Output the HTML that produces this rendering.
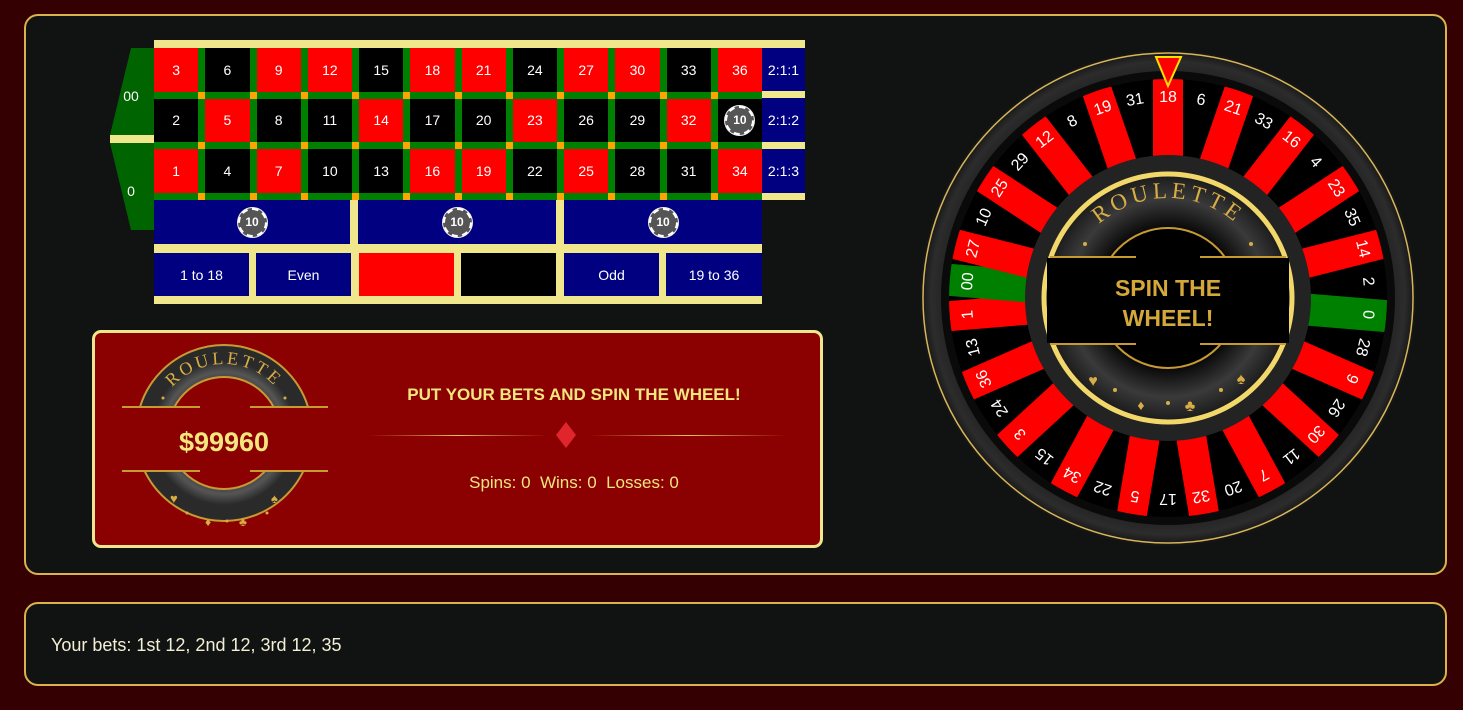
<!DOCTYPE html>
<html><head><meta charset="utf-8">
<style>
*{box-sizing:border-box;margin:0;padding:0}
body{width:1463px;height:710px;overflow:hidden;background:#350002;font-family:"Liberation Sans",sans-serif;position:relative}
.panel{position:absolute;left:24px;top:14px;width:1423px;height:561px;background:#111313;border:2px solid #dcb24c;border-radius:14px}
.panel2{position:absolute;left:24px;top:602px;width:1423px;height:84px;background:#111313;border:2px solid #dcb24c;border-radius:14px;color:#f3efd6;font-size:18px;padding:31px 0 0 25px}
.a{position:absolute}
.kh{background:#f0e68c}
.grid{position:absolute;left:154px;top:48px;width:608px;height:152px;background:#008000;display:grid;grid-template-columns:repeat(12,1fr);grid-template-rows:repeat(3,1fr);column-gap:7px;row-gap:7px;padding-bottom:7px}
.c{position:relative;display:flex;align-items:center;justify-content:center;color:#fff;font-size:14px}
.c::after{content:"";position:absolute;right:-7px;bottom:-7px;width:7px;height:7px;background:#ffa500}
.c.l::after{display:none}
.r{background:#f00}.b{background:#000}
.bl{position:absolute;background:#000080;color:#fff;font-size:14px;display:flex;align-items:center;justify-content:center}
.chip{width:29px;height:29px;border-radius:50%;background:#555;border:2px dashed #fff;box-shadow:0 0 0 1px #eee;color:#fff;font-weight:bold;font-size:12px;display:flex;align-items:center;justify-content:center}
.info{position:absolute;left:92px;top:330px;width:731px;height:218px;background:#8b0000;border:3px solid #f0e68c;border-radius:9px}
</style></head><body>
<div class="panel"></div>

<div class="a kh" style="left:154px;top:40px;width:651px;height:160px"></div>
<div class="a kh" style="left:154px;top:200px;width:608px;height:104px"></div>
<svg class="a" style="left:108px;top:48px" width="47" height="183">
<polygon points="23,0 46,0 46,87 2,87" fill="#006400"/>
<rect x="2" y="87" width="44" height="8" fill="#f0e68c"/>
<polygon points="2,95 46,95 46,182 23,182" fill="#006400"/>
<text x="23" y="53" fill="#fff" font-size="14" text-anchor="middle" font-family="Liberation Sans">00</text>
<text x="23" y="148" fill="#fff" font-size="14" text-anchor="middle" font-family="Liberation Sans">0</text>
</svg>
<div class="grid">
<div class="c r">3</div><div class="c b">6</div><div class="c r">9</div><div class="c r">12</div><div class="c b">15</div><div class="c r">18</div><div class="c r">21</div><div class="c b">24</div><div class="c r">27</div><div class="c r">30</div><div class="c b">33</div><div class="c r l">36</div>
<div class="c b">2</div><div class="c r">5</div><div class="c b">8</div><div class="c b">11</div><div class="c r">14</div><div class="c b">17</div><div class="c b">20</div><div class="c r">23</div><div class="c b">26</div><div class="c b">29</div><div class="c r">32</div><div class="c b l"><div class="chip">10</div></div>
<div class="c r">1</div><div class="c b">4</div><div class="c r">7</div><div class="c b">10</div><div class="c b">13</div><div class="c r">16</div><div class="c r">19</div><div class="c b">22</div><div class="c r">25</div><div class="c b">28</div><div class="c b">31</div><div class="c r l">34</div>
</div>
<div class="bl" style="left:762px;top:48px;width:43px;height:43px">2:1:1</div>
<div class="bl" style="left:762px;top:98px;width:43px;height:44px">2:1:2</div>
<div class="bl" style="left:762px;top:149px;width:43px;height:44px">2:1:3</div>
<div class="bl" style="left:154px;top:200px;width:196px;height:44px"><div class="chip">10</div></div>
<div class="bl" style="left:358px;top:200px;width:198px;height:44px"><div class="chip">10</div></div>
<div class="bl" style="left:564px;top:200px;width:198px;height:44px"><div class="chip">10</div></div>
<div class="bl" style="left:154px;top:253px;width:95px;height:43px">1 to 18</div>
<div class="bl" style="left:256px;top:253px;width:95px;height:43px">Even</div>
<div class="bl" style="left:359px;top:253px;width:95px;height:43px;background:#f00"></div>
<div class="bl" style="left:461px;top:253px;width:95px;height:43px;background:#000"></div>
<div class="bl" style="left:564px;top:253px;width:95px;height:43px">Odd</div>
<div class="bl" style="left:666px;top:253px;width:96px;height:43px">19 to 36</div>

<div class="info"></div>
<svg class="a" style="left:92px;top:330px" width="731" height="218">
<defs>
<radialGradient id="rg1" cx="0.5" cy="0.5" r="0.5"><stop offset="0.6" stop-color="#2a2a2a"/><stop offset="0.85" stop-color="#555"/><stop offset="1" stop-color="#2a2a2a"/></radialGradient>
<path id="arcA" d="M 63,103 A 69,69 0 0 1 201,103"/>
<linearGradient id="lg" x1="0" x2="1"><stop offset="0" stop-color="#d4a93a" stop-opacity="0"/><stop offset="0.5" stop-color="#e6c45a"/><stop offset="1" stop-color="#d4a93a" stop-opacity="0"/></linearGradient>
</defs>
<circle cx="132" cy="103" r="72" fill="none" stroke="url(#rg1)" stroke-width="32"/>
<circle cx="132" cy="103" r="88" fill="none" stroke="#c89a34" stroke-width="2"/>
<circle cx="132" cy="103" r="56" fill="none" stroke="#c89a34" stroke-width="2"/>
<rect x="28" y="78" width="208" height="62" fill="#8b0000"/>
<line x1="30" y1="77" x2="108" y2="77" stroke="#c89a34" stroke-width="2"/>
<line x1="158" y1="77" x2="236" y2="77" stroke="#c89a34" stroke-width="2"/>
<line x1="30" y1="141" x2="108" y2="141" stroke="#c89a34" stroke-width="2"/>
<line x1="158" y1="141" x2="236" y2="141" stroke="#c89a34" stroke-width="2"/>
<text font-family="Liberation Serif" font-size="18" fill="#d9ad45" letter-spacing="3"><textPath href="#arcA" startOffset="50%" text-anchor="middle">ROULETTE</textPath></text>
<circle cx="71" cy="68" r="1.5" fill="#d9ad45"/><circle cx="193" cy="68" r="1.5" fill="#d9ad45"/>
<text x="78" y="173" font-size="13" fill="#d9ad45">♥</text><text x="179" y="173" font-size="13" fill="#d9ad45">♠</text>
<text x="113" y="196" font-size="12" fill="#d9ad45">♦</text><text x="147" y="196" font-size="12" fill="#d9ad45">♣</text>
<circle cx="95" cy="183" r="1.5" fill="#d9ad45"/><circle cx="135" cy="191" r="1.5" fill="#d9ad45"/><circle cx="175" cy="183" r="1.5" fill="#d9ad45"/>
<text x="132" y="121" text-anchor="middle" font-family="Liberation Sans" font-weight="bold" font-size="27" fill="#f3e67e">$99960</text>
<text x="482" y="70" text-anchor="middle" font-family="Liberation Sans" font-weight="bold" font-size="17" fill="#f3e67e">PUT YOUR BETS AND SPIN THE WHEEL!</text>
<rect x="276" y="105" width="180" height="1" fill="url(#lg)"/>
<rect x="496" y="105" width="200" height="1" fill="url(#lg)"/>
<polygon points="474,92 484,105 474,118 464,105" fill="#e0262c"/>
<text x="482" y="158" text-anchor="middle" font-family="Liberation Sans" font-size="17" fill="#f3e67e">Spins: 0&#160; Wins: 0&#160; Losses: 0</text>
</svg>

<svg class="a" style="left:918px;top:48px" width="500" height="500" viewBox="-250 -250 500 500">
<defs>
<clipPath id="cl"><circle r="219"/></clipPath>
<radialGradient id="rim" r="0.5"><stop offset="0.85" stop-color="#1c1c1c"/><stop offset="0.95" stop-color="#2c2c2c"/><stop offset="1" stop-color="#111"/></radialGradient>
<radialGradient id="inner" r="0.5"><stop offset="0.55" stop-color="#050505"/><stop offset="0.8" stop-color="#3a3a3a"/><stop offset="1" stop-color="#1a1a1a"/></radialGradient>
<path id="arcW" d="M -104,2 A 104,104 0 0 1 104,2"/>
</defs>
<circle r="249" fill="url(#rim)"/>
<circle r="245" fill="none" stroke="#d6b656" stroke-width="1.5"/>
<circle r="227" fill="#0a0a0a"/>
<circle r="219" fill="#000"/>
<g clip-path="url(#cl)" font-family="Liberation Sans" font-size="16" fill="#fff" text-anchor="middle">
<g transform="rotate(0)"><rect x="-15" y="-225" width="30" height="90" fill="#f00"/><text y="-196">18</text></g>
<g transform="rotate(9.474)"><text y="-196">6</text></g>
<g transform="rotate(18.947)"><rect x="-15" y="-225" width="30" height="90" fill="#f00"/><text y="-196">21</text></g>
<g transform="rotate(28.421)"><text y="-196">33</text></g>
<g transform="rotate(37.895)"><rect x="-15" y="-225" width="30" height="90" fill="#f00"/><text y="-196">16</text></g>
<g transform="rotate(47.368)"><text y="-196">4</text></g>
<g transform="rotate(56.842)"><rect x="-15" y="-225" width="30" height="90" fill="#f00"/><text y="-196">23</text></g>
<g transform="rotate(66.316)"><text y="-196">35</text></g>
<g transform="rotate(75.789)"><rect x="-15" y="-225" width="30" height="90" fill="#f00"/><text y="-196">14</text></g>
<g transform="rotate(85.263)"><text y="-196">2</text></g>
<g transform="rotate(94.737)"><rect x="-16" y="-225" width="32" height="90" fill="#008000"/><text y="-196">0</text></g>
<g transform="rotate(104.211)"><text y="-196">28</text></g>
<g transform="rotate(113.684)"><rect x="-15" y="-225" width="30" height="90" fill="#f00"/><text y="-196">9</text></g>
<g transform="rotate(123.158)"><text y="-196">26</text></g>
<g transform="rotate(132.632)"><rect x="-15" y="-225" width="30" height="90" fill="#f00"/><text y="-196">30</text></g>
<g transform="rotate(142.105)"><text y="-196">11</text></g>
<g transform="rotate(151.579)"><rect x="-15" y="-225" width="30" height="90" fill="#f00"/><text y="-196">7</text></g>
<g transform="rotate(161.053)"><text y="-196">20</text></g>
<g transform="rotate(170.526)"><rect x="-15" y="-225" width="30" height="90" fill="#f00"/><text y="-196">32</text></g>
<g transform="rotate(180)"><text y="-196">17</text></g>
<g transform="rotate(189.474)"><rect x="-15" y="-225" width="30" height="90" fill="#f00"/><text y="-196">5</text></g>
<g transform="rotate(198.947)"><text y="-196">22</text></g>
<g transform="rotate(208.421)"><rect x="-15" y="-225" width="30" height="90" fill="#f00"/><text y="-196">34</text></g>
<g transform="rotate(217.895)"><text y="-196">15</text></g>
<g transform="rotate(227.368)"><rect x="-15" y="-225" width="30" height="90" fill="#f00"/><text y="-196">3</text></g>
<g transform="rotate(236.842)"><text y="-196">24</text></g>
<g transform="rotate(246.316)"><rect x="-15" y="-225" width="30" height="90" fill="#f00"/><text y="-196">36</text></g>
<g transform="rotate(255.789)"><text y="-196">13</text></g>
<g transform="rotate(265.263)"><rect x="-15" y="-225" width="30" height="90" fill="#f00"/><text y="-196">1</text></g>
<g transform="rotate(274.737)"><rect x="-16" y="-225" width="32" height="90" fill="#008000"/><text y="-196">00</text></g>
<g transform="rotate(284.211)"><rect x="-15" y="-225" width="30" height="90" fill="#f00"/><text y="-196">27</text></g>
<g transform="rotate(293.684)"><text y="-196">10</text></g>
<g transform="rotate(303.158)"><rect x="-15" y="-225" width="30" height="90" fill="#f00"/><text y="-196">25</text></g>
<g transform="rotate(312.632)"><text y="-196">29</text></g>
<g transform="rotate(322.105)"><rect x="-15" y="-225" width="30" height="90" fill="#f00"/><text y="-196">12</text></g>
<g transform="rotate(331.579)"><text y="-196">8</text></g>
<g transform="rotate(341.053)"><rect x="-15" y="-225" width="30" height="90" fill="#f00"/><text y="-196">19</text></g>
<g transform="rotate(350.526)"><text y="-196">31</text></g>
</g>
<circle r="143" fill="#232323"/>
<circle r="124" fill="url(#inner)" stroke="#f2d76a" stroke-width="5"/>
<circle r="70" fill="#000" stroke="#c89a34" stroke-width="2"/>
<rect x="-121" y="-40" width="242" height="85" fill="#000"/>
<line x1="-118" y1="-41" x2="-32" y2="-41" stroke="#c89a34" stroke-width="2"/>
<line x1="32" y1="-41" x2="118" y2="-41" stroke="#c89a34" stroke-width="2"/>
<line x1="-118" y1="46" x2="-32" y2="46" stroke="#c89a34" stroke-width="2"/>
<line x1="32" y1="46" x2="118" y2="46" stroke="#c89a34" stroke-width="2"/>
<g transform="translate(0,2)"><text font-family="Liberation Serif" font-size="23" fill="#d9ad45" letter-spacing="4"><textPath href="#arcW" startOffset="50%" text-anchor="middle">ROULETTE</textPath></text></g>
<circle cx="-83" cy="-54" r="2" fill="#d9ad45"/><circle cx="83" cy="-54" r="2" fill="#d9ad45"/>
<text x="-75" y="88" font-size="16" fill="#d9ad45" text-anchor="middle">♥</text>
<text x="73" y="86" font-size="16" fill="#d9ad45" text-anchor="middle">♠</text>
<text x="-27" y="112" font-size="14" fill="#d9ad45" text-anchor="middle">♦</text>
<text x="22" y="113" font-size="16" fill="#d9ad45" text-anchor="middle">♣</text>
<circle cx="-53" cy="92" r="2" fill="#d9ad45"/><circle cx="0" cy="105" r="2" fill="#d9ad45"/><circle cx="53" cy="92" r="2" fill="#d9ad45"/>
<text x="0" y="-2" text-anchor="middle" font-family="Liberation Sans" font-weight="bold" font-size="23" fill="#d4a93a">SPIN THE</text>
<text x="0" y="28" text-anchor="middle" font-family="Liberation Sans" font-weight="bold" font-size="23" fill="#d4a93a">WHEEL!</text>
<polygon points="-12,-241 13,-241 0,-212" fill="#f00" stroke="#ffe000" stroke-width="2"/>
</svg>

<div class="panel2">Your bets: 1st 12, 2nd 12, 3rd 12, 35</div>
</body></html>
